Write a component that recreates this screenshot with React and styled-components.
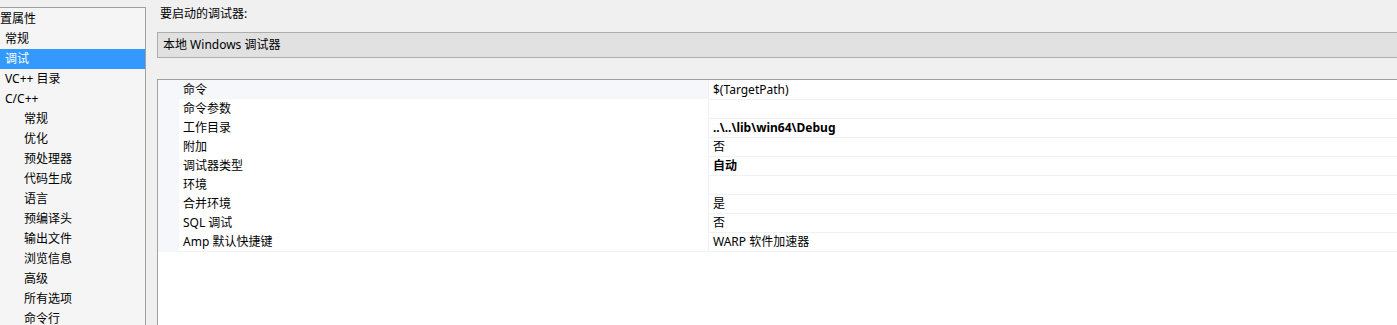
import React from "react";
import styled, { createGlobalStyle } from "styled-components";

const GlobalStyle = createGlobalStyle`
  body {
    margin: 0;
    background: #f0f0f0;
    font-family: "Noto Sans", "Noto Sans CJK SC", sans-serif;
    font-size: 12px;
    color: #000;
  }
`;

// tree on the left: level 0 items sit at 5px, level 1 children at 24px
const treeItems = [
  { label: "置属性", level: -1 },
  { label: "常规", level: 0 },
  { label: "调试", level: 0, selected: true },
  { label: "VC++ 目录", level: 0 },
  { label: "C/C++", level: 0 },
  { label: "常规", level: 1 },
  { label: "优化", level: 1 },
  { label: "预处理器", level: 1 },
  { label: "代码生成", level: 1 },
  { label: "语言", level: 1 },
  { label: "预编译头", level: 1 },
  { label: "输出文件", level: 1 },
  { label: "浏览信息", level: 1 },
  { label: "高级", level: 1 },
  { label: "所有选项", level: 1 },
  { label: "命令行", level: 1 },
];

const properties = [
  { name: "命令", value: "$(TargetPath)", current: true },
  { name: "命令参数", value: "" },
  { name: "工作目录", value: "..\\..\\lib\\win64\\Debug", bold: true },
  { name: "附加", value: "否" },
  { name: "调试器类型", value: "自动", bold: true },
  { name: "环境", value: "" },
  { name: "合并环境", value: "是" },
  { name: "SQL 调试", value: "否" },
  { name: "Amp 默认快捷键", value: "WARP 软件加速器" },
];

const App = () => {
  return (
    <>
      <GlobalStyle />
      <Page>
        <TreePanel>
          {treeItems.map((item, i) => (
            <TreeRow key={i} $level={item.level} $selected={item.selected}>
              {item.label}
            </TreeRow>
          ))}
        </TreePanel>
        <Content>
          <Label>要启动的调试器:</Label>
          <Dropdown>本地 Windows 调试器</Dropdown>
          <Grid>
            {properties.map((p, i) => (
              <GridRow key={i}>
                <Margin />
                <NameCell $current={p.current}>{p.name}</NameCell>
                <ValueCell $bold={p.bold}>{p.value}</ValueCell>
              </GridRow>
            ))}
          </Grid>
        </Content>
      </Page>
    </>
  );
};

const Page = styled.div`
  display: flex;
  height: 325px;
  overflow: hidden;
`;

const TreePanel = styled.div`
  width: 145px;
  flex-shrink: 0;
  margin-top: 7px;
  padding-top: 1px;
  background: #f5f5f5;
  border-top: 1px solid #a0a0a0;
  border-right: 1px solid #a0a0a0;
`;

const TreeRow = styled.div`
  height: 20px;
  line-height: 20px;
  white-space: nowrap;
  padding-left: ${(p) => (p.$level < 0 ? 0 : p.$level === 0 ? 5 : 24)}px;
  background: ${(p) => (p.$selected ? "#3399ff" : "transparent")};
  color: ${(p) => (p.$selected ? "#fff" : "#000")};
`;

const Content = styled.div`
  flex: 1;
  display: flex;
  flex-direction: column;
  padding: 4px 0 0 11px;
  margin-right: -2px;
`;

const Label = styled.div`
  height: 20px;
  line-height: 20px;
  padding-left: 3px;
  margin-bottom: 8px;
`;

const Dropdown = styled.div`
  height: 24px;
  line-height: 24px;
  padding-left: 5px;
  background: #e1e1e1;
  border: 1px solid #adadad;
`;

const Grid = styled.div`
  margin-top: 21px;
  flex: 1;
  background: #fff;
  border-top: 1px solid #a0a0a0;
  border-left: 1px solid #a0a0a0;
`;

const GridRow = styled.div`
  display: grid;
  grid-template-columns: 21px 530px 1fr;
  height: 19px;
`;

const Margin = styled.div`
  background: #f5f7fb;
`;

const NameCell = styled.div`
  line-height: 19px;
  padding-left: 4px;
  white-space: nowrap;
  background: ${(p) => (p.$current ? "#f5f7fb" : "#fff")};
  border-bottom: 1px solid #eef1f7;
  border-right: 1px solid #eef1f7;
`;

const ValueCell = styled.div`
  line-height: 19px;
  padding-left: 4px;
  white-space: nowrap;
  font-weight: ${(p) => (p.$bold ? 700 : 400)};
  border-bottom: 1px solid #eef1f7;
`;

export default App;
